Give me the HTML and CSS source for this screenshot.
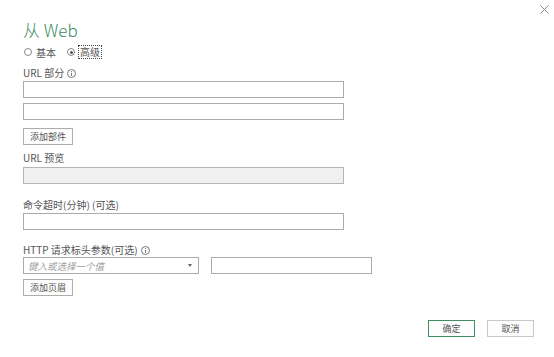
FILE: index.html
```html
<!DOCTYPE html>
<html lang="zh-CN">
<head>
    <meta charset="UTF-8">
    <meta name="viewport" content="width=device-width, initial-scale=1.0">
    <title>从 Web</title>
    <link rel="stylesheet" href="styles.css">
</head>
<body>
    <div class="dialog">
        <button class="close" aria-label="关闭">
            <svg width="9" height="9" viewBox="0 0 9 9"><path d="M0.5 0.5 L8.5 8.5 M8.5 0.5 L0.5 8.5" stroke="#8a8a8a" stroke-width="1" fill="none"/></svg>
        </button>

        <h1 class="title">从 Web</h1>

        <div class="radios">
            <label class="radio"><span class="dot"></span>基本</label>
            <label class="radio checked"><span class="dot"></span><span class="focus">高级</span></label>
        </div>

        <div class="label l1">URL 部分
            <svg class="info" width="9" height="9" viewBox="0 0 9 9"><circle cx="4.5" cy="4.5" r="4" stroke="#777" fill="none"/><path d="M4.5 3.8 V7 M4.5 2 V2.9" stroke="#777"/></svg>
        </div>
        <input class="field f1" type="text">
        <input class="field f2" type="text">
        <button class="btn b1">添加部件</button>

        <div class="label l2">URL 预览</div>
        <div class="field preview"></div>

        <div class="label l3">命令超时(分钟) (可选)</div>
        <input class="field f3" type="text">

        <div class="label l4">HTTP 请求标头参数(可选)
            <svg class="info" width="9" height="9" viewBox="0 0 9 9"><circle cx="4.5" cy="4.5" r="4" stroke="#777" fill="none"/><path d="M4.5 3.8 V7 M4.5 2 V2.9" stroke="#777"/></svg>
        </div>
        <div class="header-row">
            <div class="combo">
                <span class="placeholder">键入或选择一个值</span>
                <span class="arrow"></span>
            </div>
            <input class="field value" type="text">
        </div>
        <button class="btn b2">添加页眉</button>

        <div class="footer">
            <button class="btn ok">确定</button>
            <button class="btn cancel">取消</button>
        </div>
    </div>
</body>
</html>
```

FILE: styles.css
```css
body {
    margin: 0;
    background: #fff;
    font-family: "Noto Sans CJK SC", "Noto Sans", sans-serif;
    color: #555;
}
.dialog {
    position: relative;
    width: 554px;
    height: 357px;
    box-sizing: border-box;
    padding: 20px 0 0 23px;
}
.close {
    position: absolute;
    top: 5px;
    right: 5px;
    border: 0;
    background: none;
    padding: 0;
    width: 9px;
    height: 9px;
    line-height: 0;
}
.title {
    margin: 0;
    height: 20px;
    line-height: 20px;
    font-size: 17px;
    font-weight: 300;
    color: #3b8c63;
}
.radios {
    margin-top: 6px;
    height: 12px;
    display: flex;
    align-items: center;
    font-size: 10px;
    color: #555;
}
.radio {
    display: flex;
    align-items: center;
    margin-right: 10px;
}
.dot {
    width: 6px;
    height: 6px;
    border: 1px solid #888;
    border-radius: 50%;
    margin: 0 4px 0 1px;
    position: relative;
}
.checked .dot::after {
    content: "";
    position: absolute;
    left: 1.5px;
    top: 1.5px;
    width: 3px;
    height: 3px;
    border-radius: 50%;
    background: #555;
}
.focus {
    outline: 1px dotted #444;
    padding: 0 1px;
    line-height: 12px;
}
.label {
    height: 12px;
    line-height: 12px;
    font-size: 10px;
    color: #555;
    display: flex;
    align-items: center;
    gap: 3px;
}
.info {
    display: block;
}
.l1 { margin-top: 9px; }
.l2 { margin-top: 7px; }
.l3 { margin-top: 15px; }
.l4 { margin-top: 14px; }
.field {
    display: block;
    width: 321px;
    height: 17px;
    box-sizing: border-box;
    border: 1px solid #ababab;
    background: #fff;
    margin: 0;
    padding: 0 3px;
    font: inherit;
}
.f1 { margin-top: 2px; }
.f2 { margin-top: 5px; }
.f3 { margin-top: 2px; }
.preview {
    margin-top: 3px;
    background: #f0f0f0;
    border-color: #b5b5b5;
}
.btn {
    display: block;
    height: 17px;
    box-sizing: border-box;
    border: 1px solid #adadad;
    background: #fdfdfd;
    font-family: inherit;
    font-size: 9px;
    color: #555;
    padding: 0;
    line-height: 15px;
}
.b1 {
    width: 50px;
    margin-top: 8px;
}
.header-row {
    margin-top: 1px;
    display: flex;
    gap: 12px;
}
.combo {
    width: 176px;
    height: 17px;
    box-sizing: border-box;
    border: 1px solid #ababab;
    display: flex;
    align-items: center;
    justify-content: space-between;
    padding: 0 6px 0 4px;
}
.placeholder {
    font-size: 9.5px;
    font-style: italic;
    color: #a0a0a0;
}
.arrow {
    width: 0;
    height: 0;
    border-left: 2.5px solid transparent;
    border-right: 2.5px solid transparent;
    border-top: 3px solid #666;
}
.value {
    width: 161px;
}
.b2 {
    width: 50px;
    margin-top: 5px;
}
.footer {
    margin-top: 24px;
    display: flex;
    justify-content: flex-end;
    gap: 12px;
    padding-right: 20px;
}
.ok, .cancel {
    width: 47px;
}
.ok {
    border-color: #3f8f62;
    border-width: 1.5px;
}
.cancel {
    border-color: #c8c8c8;
}
```
